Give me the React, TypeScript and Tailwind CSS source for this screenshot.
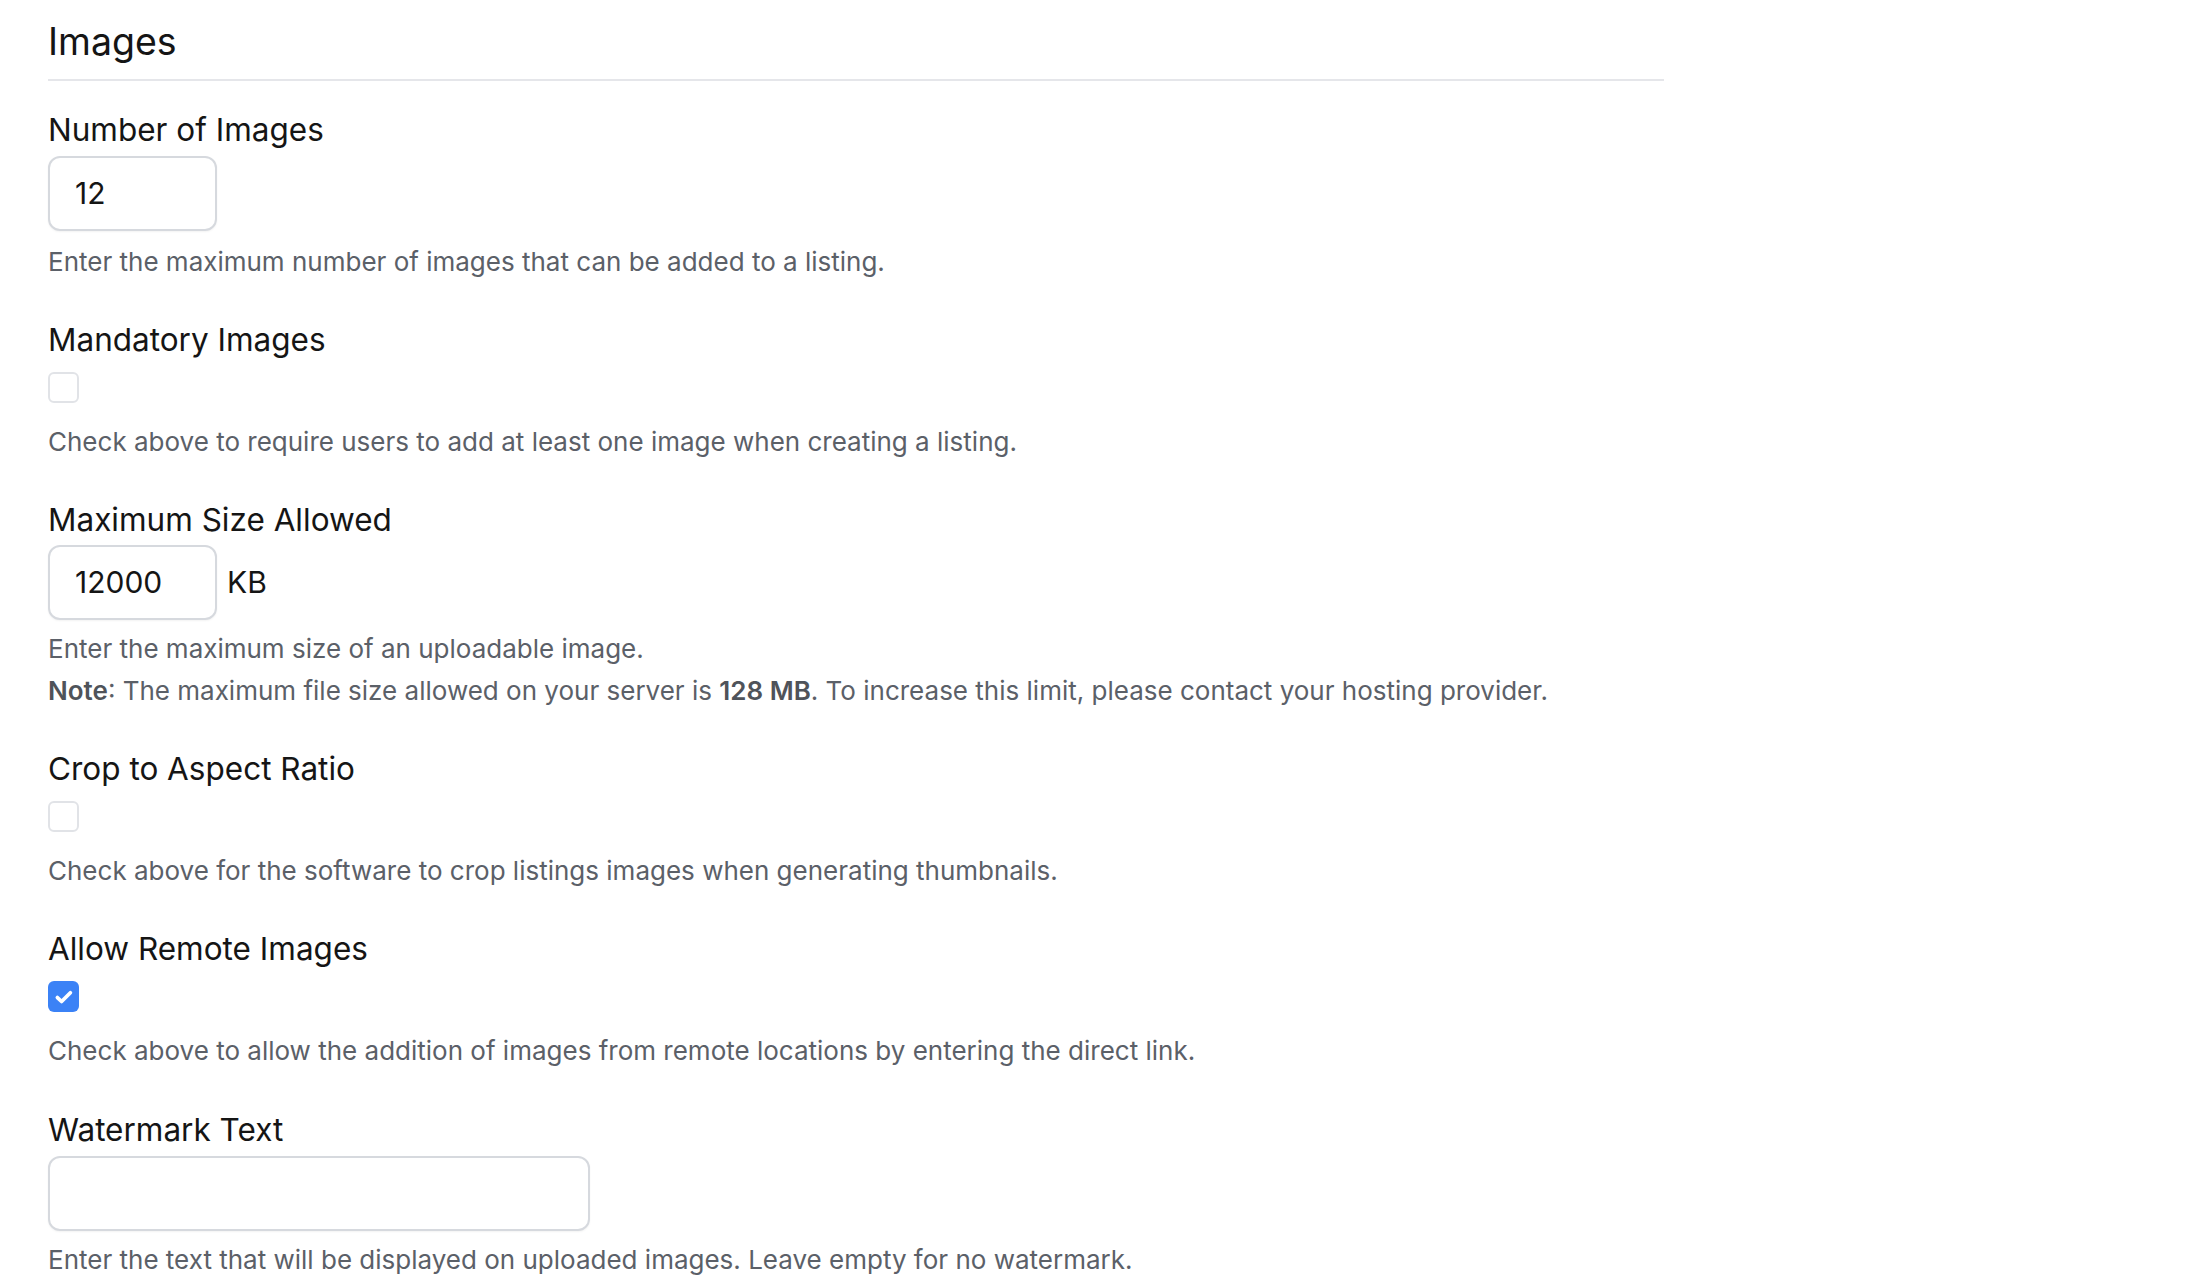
import React from "react";

const font = { fontFamily: 'Inter, "Noto Sans", "Liberation Sans", sans-serif' };

function Label({ children, className = "mb-[6px]" }: { children: React.ReactNode; className?: string }) {
  return <div className={"text-[31.5px] leading-[44px] text-[#151515] " + className}>{children}</div>;
}

function Desc({ children, className = "" }: { children: React.ReactNode; className?: string }) {
  return <p className={"text-[26px] leading-[36px] text-[#5b6068] " + className}>{children}</p>;
}

function TextInput({ value, width }: { value: string; width: string }) {
  return (
    <div
      className={
        "h-[75px] rounded-[12px] border-2 border-[#d6d9de] bg-white shadow-[0_1px_2px_rgba(0,0,0,0.05)] flex items-center pl-[25px] text-[30px] text-[#151515] " +
        width
      }
    >
      {value}
    </div>
  );
}

function Checkbox({ checked }: { checked?: boolean }) {
  if (checked) {
    return (
      <div className="w-[31px] h-[31px] rounded-[6px] bg-[#3b82f6] flex items-center justify-center">
        <svg width="22" height="22" viewBox="0 0 20 20" fill="none">
          <path d="M4 10.5l3.8 3.6 8-8" stroke="white" strokeWidth="3.4" strokeLinecap="round" strokeLinejoin="round" />
        </svg>
      </div>
    );
  }
  return <div className="w-[31px] h-[31px] rounded-[6px] border-2 border-[#e1e3e7] bg-white" />;
}

export default function App() {
  return (
    <div className="min-h-screen bg-white" style={font}>
      <div className="pl-[48px] pt-[18px] w-[1664px]">
        <h2 className="text-[37.5px] leading-[48px] font-normal text-[#151515] pb-[13px] border-b-2 border-[#e5e6ea]">
          Images
        </h2>

        <div className="mt-[27px]">
          <Label className="mb-[4px]">Number of Images</Label>
          <TextInput value="12" width="w-[169px]" />
          <Desc className="mt-[13px]">Enter the maximum number of images that can be added to a listing.</Desc>
        </div>

        <div className="mt-[38px]">
          <Label>Mandatory Images</Label>
          <div className="mt-[10px]">
            <Checkbox />
          </div>
          <Desc className="mt-[21px]">Check above to require users to add at least one image when creating a listing.</Desc>
        </div>

        <div className="mt-[38px]">
          <Label className="mb-[3px]">Maximum Size Allowed</Label>
          <div className="flex items-center gap-[10px]">
            <TextInput value="12000" width="w-[169px]" />
            <span className="text-[30px] text-[#151515]">KB</span>
          </div>
          <Desc className="mt-[11px]">Enter the maximum size of an uploadable image.</Desc>
          <Desc className="mt-[6px]">
            <span className="font-semibold text-[#4f535a]">Note</span>: The maximum file size allowed on your server is{" "}
            <span className="font-semibold text-[#4f535a]">128 MB</span>. To increase this limit, please contact your hosting
            provider.
          </Desc>
        </div>

        <div className="mt-[38px]">
          <Label>Crop to Aspect Ratio</Label>
          <div className="mt-[10px]">
            <Checkbox />
          </div>
          <Desc className="mt-[21px]">Check above for the software to crop listings images when generating thumbnails.</Desc>
        </div>

        <div className="mt-[38px]">
          <Label>Allow Remote Images</Label>
          <div className="mt-[10px]">
            <Checkbox checked />
          </div>
          <Desc className="mt-[21px]">Check above to allow the addition of images from remote locations by entering the direct link.</Desc>
        </div>

        <div className="mt-[39px]">
          <Label className="mb-[4px]">Watermark Text</Label>
          <TextInput value="" width="w-[542px]" />
          <Desc className="mt-[11px]">Enter the text that will be displayed on uploaded images. Leave empty for no watermark.</Desc>
        </div>
      </div>
    </div>
  );
}
